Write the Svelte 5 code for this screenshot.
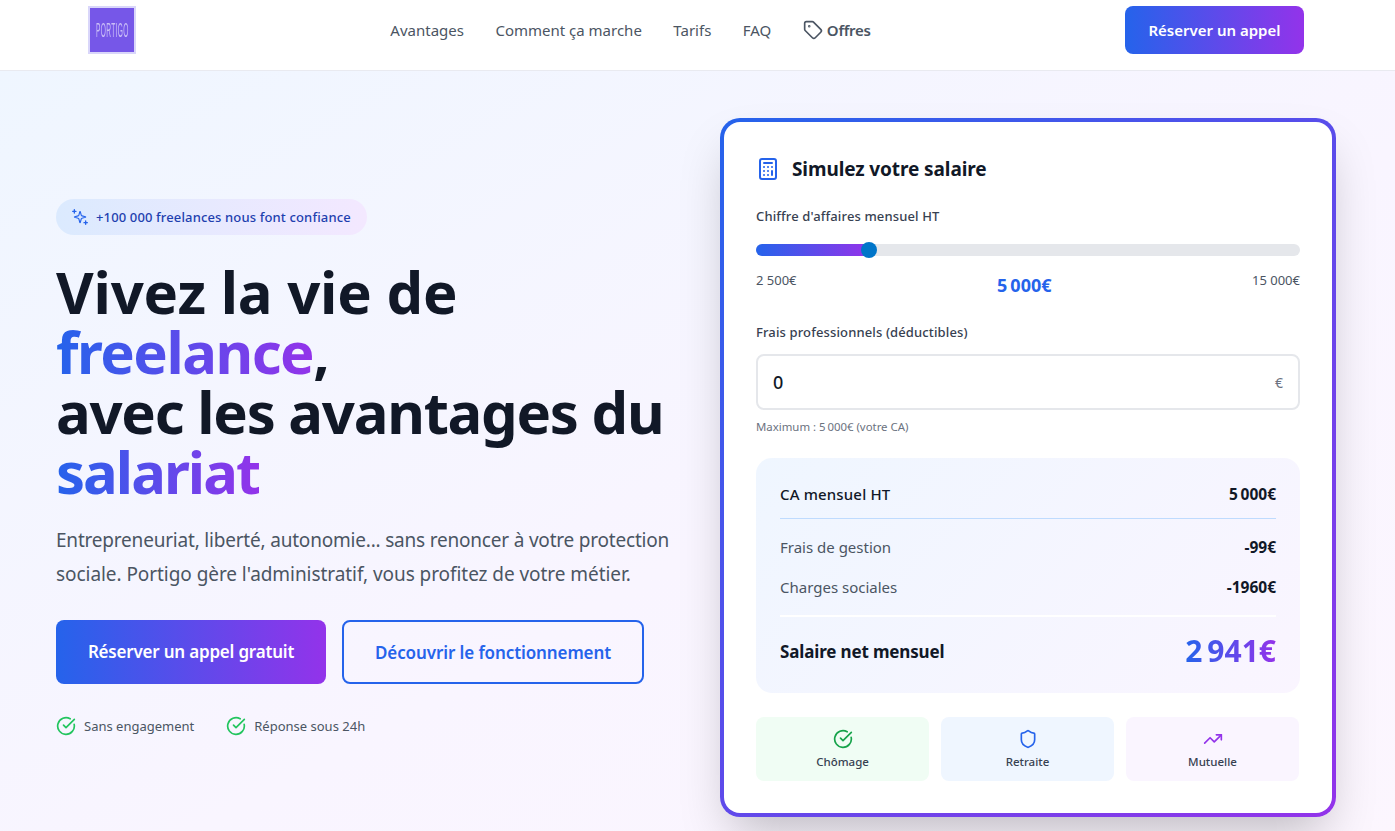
<script lang="ts">
	const navLinks = ['Avantages', 'Comment ça marche', 'Tarifs', 'FAQ'];
	const perks = ['Sans engagement', 'Réponse sous 24h'];
</script>

<header class="topbar">
	<div class="logo"><span>PORTIGO</span></div>
	<nav class="nav">
		{#each navLinks as link}
			<a href="#top">{link}</a>
		{/each}
		<a href="#top" class="offers">
			<svg width="20" height="20" viewBox="0 0 24 24" fill="none" stroke="currentColor" stroke-width="2" stroke-linecap="round" stroke-linejoin="round">
				<path d="M12.586 2.586A2 2 0 0 0 11.172 2H4a2 2 0 0 0-2 2v7.172a2 2 0 0 0 .586 1.414l8.704 8.704a2.426 2.426 0 0 0 3.42 0l6.58-6.58a2.426 2.426 0 0 0 0-3.42z" />
				<circle cx="7.5" cy="7.5" r=".5" fill="currentColor" />
			</svg>
			Offres
		</a>
	</nav>
	<a href="#top" class="cta">Réserver un appel</a>
</header>

<main class="hero">
	<section class="pitch">
		<div class="badge">
			<svg width="16" height="16" viewBox="0 0 24 24" fill="none" stroke="#2563eb" stroke-width="2" stroke-linecap="round" stroke-linejoin="round">
				<path transform="translate(2 2) scale(.84)" d="M9.937 15.5A2 2 0 0 0 8.5 14.063l-6.135-1.582a.5.5 0 0 1 0-.962L8.500 9.936A2 2 0 0 0 9.937 8.500l1.582-6.135a.5.5 0 0 1 .963 0L14.063 8.500A2 2 0 0 0 15.500 9.937l6.135 1.581a.5.5 0 0 1 0 .964L15.500 14.063a2 2 0 0 0-1.437 1.437l-1.582 6.135a.5.5 0 0 1-.963 0z" />
				<path d="M3.500 1v5M6 3.500H1M20.500 18v5M23 20.500h-5" />
			</svg>
			<span>+100 000 freelances nous font confiance</span>
		</div>
		<h1>
			<span class="line-one">Vivez la vie de</span><br />
			<span class="grad word">freelance</span>,<br />
			avec les avantages du<br />
			<span class="grad word last">salariat</span>
		</h1>
		<p class="lead">
			Entrepreneuriat, liberté, autonomie... sans renoncer à votre protection<br />
			<span class="lead-end">sociale. Portigo gère l'administratif, vous profitez de votre métier.</span>
		</p>
		<div class="actions">
			<a href="#top" class="btn primary">Réserver un appel gratuit</a>
			<a href="#top" class="btn outline">Découvrir le fonctionnement</a>
		</div>
		<ul class="perks">
			{#each perks as perk}
				<li>
					<svg width="20" height="20" viewBox="0 0 24 24" fill="none" stroke="#22c55e" stroke-width="2" stroke-linecap="round" stroke-linejoin="round">
						<path d="M21.801 10A10 10 0 1 1 17 3.335" />
						<path d="m9 11 3 3L22 4" />
					</svg>
					{perk}
				</li>
			{/each}
		</ul>
	</section>

	<aside class="card">
		<div class="card-inner">
			<div class="card-title">
				<svg width="24" height="24" viewBox="0 0 24 24" fill="none" stroke="#2563eb" stroke-width="2" stroke-linecap="round" stroke-linejoin="round">
					<rect x="4" y="2" width="16" height="20" rx="2" />
					<path d="M8 6h8M16 14v4M16 10h.01M12 10h.01M8 10h.01M12 14h.01M8 14h.01M12 18h.01M8 18h.01" />
				</svg>
				<h2>Simulez votre salaire</h2>
			</div>

			<div class="field-label">Chiffre d'affaires mensuel HT</div>
			<div class="slider">
				<div class="slider-fill" style="width: {(113 / 544) * 100}%"></div>
				<div class="slider-thumb" style="left: {(113 / 544) * 100}%"></div>
			</div>
			<div class="scale">
				<span>2 500€</span>
				<strong>5&#8239;000€</strong>
				<span>15 000€</span>
			</div>

			<div class="field-label second">Frais professionnels (déductibles)</div>
			<div class="input">
				<span class="input-value">0</span>
				<span class="input-unit">€</span>
			</div>
			<div class="hint">Maximum : 5&#8239;000€ (votre CA)</div>

			<div class="results">
				<div class="row head"><span>CA mensuel HT</span><b>5&#8239;000€</b></div>
				<div class="row fee first"><span>Frais de gestion</span><b>-99€</b></div>
				<div class="row fee"><span>Charges sociales</span><b>-1960€</b></div>
				<div class="row net"><span>Salaire net mensuel</span><b class="grad">2&#8239;941€</b></div>
			</div>

			<div class="benefits">
				<div class="benefit green">
					<svg width="20" height="20" viewBox="0 0 24 24" fill="none" stroke="#16a34a" stroke-width="2" stroke-linecap="round" stroke-linejoin="round">
						<path d="M21.801 10A10 10 0 1 1 17 3.335" />
						<path d="m9 11 3 3L22 4" />
					</svg>
					<span>Chômage</span>
				</div>
				<div class="benefit blue">
					<svg width="20" height="20" viewBox="0 0 24 24" fill="none" stroke="#2563eb" stroke-width="2" stroke-linecap="round" stroke-linejoin="round">
						<path d="M20 13c0 5-3.5 7.5-7.66 8.95a1 1 0 0 1-.67-.01C7.5 20.5 4 18 4 13V6a1 1 0 0 1 1-1c2 0 4.500-1.200 6.240-2.720a1.170 1.170 0 0 1 1.520 0C14.510 3.810 17 5 19 5a1 1 0 0 1 1 1z" />
					</svg>
					<span>Retraite</span>
				</div>
				<div class="benefit purple">
					<svg width="20" height="20" viewBox="0 0 24 24" fill="none" stroke="#9333ea" stroke-width="2" stroke-linecap="round" stroke-linejoin="round">
						<path d="M22 7 13.500 15.500 8.500 10.500 2 17" />
						<path d="M16 7h6v6" />
					</svg>
					<span>Mutuelle</span>
				</div>
			</div>
		</div>
	</aside>
</main>

<style>
	:global(body) {
		margin: 0;
		font-family: 'Noto Sans', 'Open Sans', sans-serif;
		color: #111827;
		background: #fff;
		overflow-x: hidden;
	}

	a {
		text-decoration: none;
		color: inherit;
	}

	/* Header */
	.topbar {
		height: 71px;
		box-sizing: border-box;
		display: flex;
		justify-content: space-between;
		align-items: center;
		padding: 0 91px 10px 88px;
		background: #fff;
		border-bottom: 1px solid #e9eaf0;
	}

	.logo {
		width: 48px;
		height: 48px;
		box-sizing: border-box;
		border: 2px solid #d9d6fa;
		background: #7657e8;
		display: flex;
		align-items: center;
		justify-content: center;
		overflow: hidden;
	}

	.logo span {
		font-family: 'Liberation Sans', sans-serif;
		font-size: 20px;
		color: #d8cffa;
		opacity: 0.85;
		transform: scaleX(0.33);
		font-weight: 400;
		letter-spacing: 1px;
	}

	.nav {
		display: flex;
		align-items: center;
		gap: 31.5px;
		font-size: 15px;
		color: #4b5563;
	}

	.offers {
		display: flex;
		align-items: center;
		gap: 4px;
		font-weight: 600;
		letter-spacing: -0.25px;
	}

	.cta {
		width: 179px;
		height: 48px;
		display: flex;
		align-items: center;
		justify-content: center;
		border-radius: 8px;
		color: #fff;
		font-size: 15px;
		font-weight: 600;
		background: linear-gradient(90deg, #2563eb, #9333ea);
	}

	/* Hero */
	.hero {
		display: grid;
		grid-template-columns: 1fr 616px;
		gap: 48px;
		align-items: center;
		padding: 47px 59px 48px 56px;
		background: linear-gradient(to bottom right, #eff6ff 0%, #f9f5ff 55%, #fcf6fe 100%);
	}

	.badge {
		display: inline-flex;
		align-items: center;
		gap: 8px;
		height: 36px;
		padding: 0 16px;
		border-radius: 999px;
		background: linear-gradient(90deg, #dbeafe, #f3e8ff);
		color: #1e40af;
		font-size: 13px;
		font-weight: 500;
		letter-spacing: 0.14px;
	}

	h1 {
		margin: 27px 0 0;
		font-size: 58px;
		line-height: 60px;
		font-weight: 700;
		letter-spacing: -1.25px;
		white-space: nowrap;
		color: #111827;
	}

	.line-one {
		letter-spacing: -0.2px;
	}

	.grad {
		background: linear-gradient(90deg, #2563eb, #9333ea);
		-webkit-background-clip: text;
		background-clip: text;
		color: transparent;
	}

	.word {
		letter-spacing: -1.5px;
	}

	.word.last {
		letter-spacing: -2px;
	}

	.lead {
		margin: 21px 0 0;
		font-size: 19px;
		line-height: 34px;
		letter-spacing: -0.2px;
		white-space: nowrap;
		color: #4b5563;
	}

	.lead-end {
		letter-spacing: -0.06px;
	}

	.actions {
		display: flex;
		gap: 16px;
		margin-top: 29px;
	}

	.btn {
		height: 64px;
		box-sizing: border-box;
		display: flex;
		align-items: center;
		justify-content: center;
		border-radius: 8px;
		font-size: 17px;
		font-weight: 600;
	}

	.btn.primary {
		width: 270px;
		padding-bottom: 2px;
		color: #fff;
		letter-spacing: -0.2px;
		background: linear-gradient(90deg, #2563eb, #9333ea);
	}

	.btn.outline {
		width: 302px;
		color: #2563eb;
		letter-spacing: -0.1px;
		border: 2px solid #2563eb;
	}

	.perks {
		display: flex;
		gap: 32px;
		list-style: none;
		margin: 32px 0 0;
		padding: 0;
		font-size: 13px;
		color: #4b5563;
	}

	.perks li {
		display: flex;
		align-items: center;
		gap: 8px;
	}

	/* Simulator card */
	.card {
		padding: 4px;
		border-radius: 20px;
		background: linear-gradient(135deg, #2563eb, #9333ea);
		box-shadow: 0 25px 50px -12px rgba(0, 0, 0, 0.25);
	}

	.card-inner {
		box-sizing: border-box;
		height: 691px;
		padding: 31px 32px 32px;
		border-radius: 16px;
		background: #fff;
	}

	.card-title {
		display: flex;
		align-items: center;
		gap: 12px;
		height: 32px;
	}

	h2 {
		margin: 0;
		font-size: 19px;
		font-weight: 700;
		letter-spacing: -0.1px;
	}

	.field-label {
		margin-top: 21px;
		font-size: 13px;
		font-weight: 500;
		line-height: 20px;
		letter-spacing: 0.13px;
		color: #374151;
	}

	.field-label.second {
		margin-top: 27px;
	}

	.slider {
		position: relative;
		height: 12px;
		margin-top: 18px;
		border-radius: 6px;
		background: #e5e7eb;
	}

	.slider-fill {
		height: 100%;
		border-radius: 6px;
		background: linear-gradient(90deg, #2563eb, #9333ea);
	}

	.slider-thumb {
		position: absolute;
		top: -2px;
		width: 16px;
		height: 16px;
		margin-left: -8px;
		border-radius: 50%;
		background: #0075c9;
	}

	.scale {
		display: flex;
		justify-content: space-between;
		margin-top: 14px;
		font-size: 13px;
		line-height: 20px;
		color: #4b5563;
	}

	.scale strong {
		margin-top: 5px;
		font-size: 18px;
		line-height: 20px;
		color: #2563eb;
		font-weight: 700;
	}

	.input {
		display: flex;
		align-items: center;
		justify-content: space-between;
		height: 56px;
		box-sizing: border-box;
		margin-top: 12px;
		padding: 0 15px;
		border: 2px solid #e5e7eb;
		border-radius: 8px;
	}

	.input-value {
		font-size: 18px;
		font-weight: 500;
	}

	.input-unit {
		font-size: 14px;
		color: #6b7280;
	}

	.hint {
		margin-top: 8px;
		font-size: 11.4px;
		line-height: 18px;
		color: #6b7280;
	}

	.results {
		box-sizing: border-box;
		height: 235px;
		margin-top: 22px;
		padding: 24px;
		border-radius: 16px;
		background: linear-gradient(135deg, #eff6ff, #faf5ff);
	}

	.row {
		display: flex;
		justify-content: space-between;
		align-items: center;
	}

	.row.head {
		margin-top: 0;
		padding-bottom: 12px;
		height: 24px;
		border-bottom: 1px solid #bfdbfe;
		font-size: 15px;
		font-weight: 500;
		letter-spacing: 0.15px;
	}

	.row b {
		font-weight: 700;
		font-size: 15.5px;
	}

	.row.fee {
		height: 40px;
		font-size: 15px;
		color: #4b5563;
	}

	.row.fee.first {
		margin-top: 8px;
	}

	.row.fee b {
		color: #111827;
	}

	.row.net {
		margin-top: 8px;
		padding-top: 14px;
		border-top: 2px solid #fff;
		font-size: 17px;
		font-weight: 700;
		letter-spacing: -0.15px;
	}

	.row.net b {
		font-size: 30px;
		line-height: 40px;
	}

	.benefits {
		display: grid;
		grid-template-columns: repeat(3, 173px);
		gap: 12px;
		margin-top: 24px;
	}

	.benefit {
		height: 64px;
		display: flex;
		flex-direction: column;
		align-items: center;
		justify-content: center;
		gap: 5px;
		border-radius: 8px;
		font-size: 11.5px;
		font-weight: 500;
		color: #374151;
	}

	.benefit span {
		line-height: 16px;
	}

	.green {
		background: #f0fdf4;
	}

	.blue {
		background: #eff6ff;
	}

	.purple {
		background: #faf5ff;
	}
</style>
